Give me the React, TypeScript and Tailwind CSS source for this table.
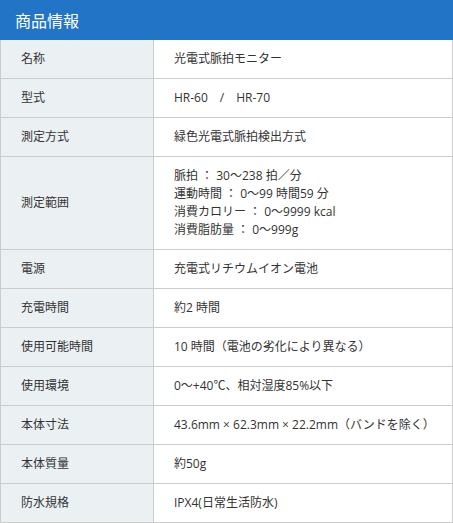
import React from "react";

const rows: { label: string; value: React.ReactNode }[] = [
  { label: "名称", value: "光電式脈拍モニター" },
  { label: "型式", value: "HR-60　/　HR-70" },
  { label: "測定方式", value: "緑色光電式脈拍検出方式" },
  {
    label: "測定範囲",
    value: (
      <>
        <div>脈拍 ： 30～238 拍／分</div>
        <div>運動時間 ： 0～99 時間59 分</div>
        <div>消費カロリー ： 0～9999 kcal</div>
        <div>消費脂肪量 ： 0～999g</div>
      </>
    ),
  },
  { label: "電源", value: "充電式リチウムイオン電池" },
  { label: "充電時間", value: "約2 時間" },
  { label: "使用可能時間", value: "10 時間（電池の劣化により異なる）" },
  { label: "使用環境", value: "0～+40℃、相対湿度85%以下" },
  { label: "本体寸法", value: "43.6mm × 62.3mm × 22.2mm（バンドを除く）" },
  { label: "本体質量", value: "約50g" },
  { label: "防水規格", value: "IPX4(日常生活防水)" },
];

export default function App() {
  return (
    <div
      className="w-[453px] bg-white text-[#333333]"
      style={{ fontFamily: '"Open Sans", "Noto Sans CJK JP", sans-serif' }}
    >
      <div
        className="h-[40px] bg-[#2174c6] flex items-center pl-[15px] text-white text-[16px]"
        style={{ fontFamily: '"Noto Sans CJK JP", sans-serif' }}
      >
        商品情報
      </div>
      <div className="border-l border-r border-[#cccccc]">
        {rows.map((r) => (
          <div key={r.label} className="flex border-b border-[#cccccc]">
            <div className="w-[153px] shrink-0 bg-[#ebf0f3] border-r border-[#cccccc] flex items-center pl-[20px] text-[12px] leading-[18px]">
              {r.label}
            </div>
            <div className="flex-1 py-[10px] pl-[20px] pr-1 text-[12px] leading-[18px] whitespace-nowrap">
              {r.value}
            </div>
          </div>
        ))}
      </div>
    </div>
  );
}
